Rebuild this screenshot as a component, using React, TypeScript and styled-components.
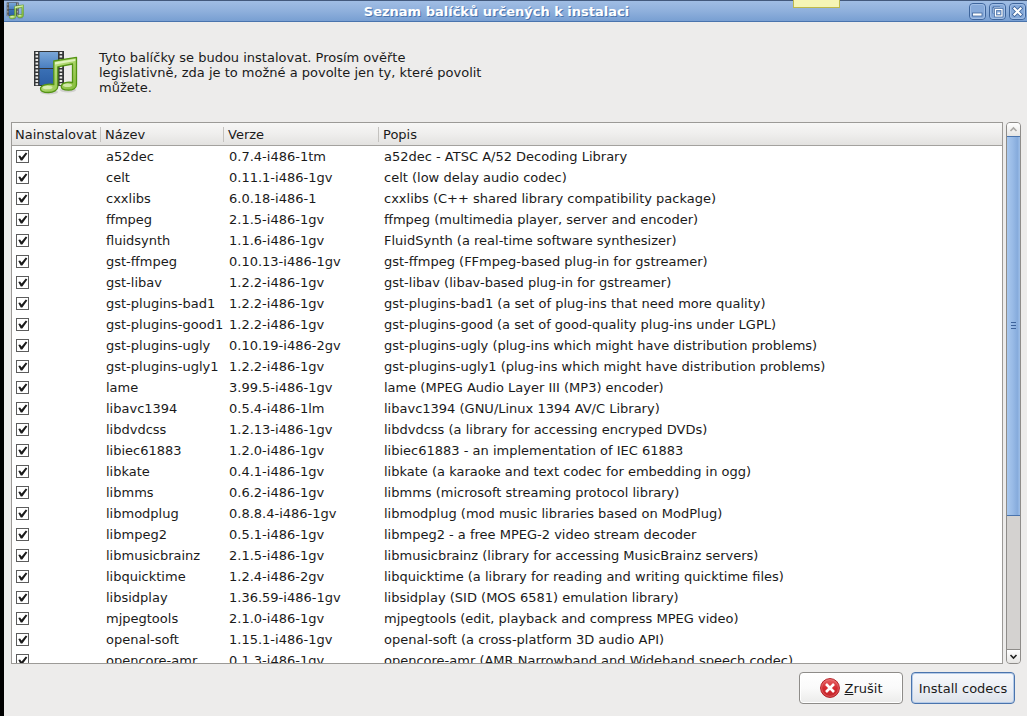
import React, { useState } from "react";
import styled, { createGlobalStyle } from "styled-components";

const GlobalStyle = createGlobalStyle`
  *, *::before, *::after { box-sizing: border-box; }
  body {
    margin: 0;
    background: #edeceb;
    color: #1a1a1a;
    font: 13px/15px "DejaVu Sans", sans-serif;
  }
  button, input { font: inherit; color: inherit; }
`;

const Window = styled.div`
  display: flex;
  flex-direction: column;
  height: 100vh;
  border-left: 4px solid #000;
  background: #edeceb;
  overflow: hidden;
`;

const TitleBar = styled.header`
  position: relative;
  flex: none;
  display: flex;
  align-items: center;
  gap: 3px;
  height: 22px;
  padding: 0 1px 0 2px;
  border-top: 1px solid #43597c;
  border-bottom: 1px solid #4a74ad;
  background: linear-gradient(#a0bde4, #8fb0dc 50%, #789fd2);
`;

const Title = styled.h1`
  flex: 1;
  margin: 0;
  text-align: center;
  font-size: 13px;
  line-height: 15px;
  font-weight: bold;
  color: #fff;
  text-shadow: 1px 1px 0 #4a74ad;
`;

const StickyNote = styled.div`
  position: absolute;
  top: -1px;
  right: 187px;
  width: 47px;
  height: 8px;
  border: 1px solid #bdb94c;
  border-top: 0;
  background: #f5f5b5;
`;

const WindowButton = styled.button`
  display: flex;
  width: 17px;
  height: 17px;
  padding: 0;
  border: 0;
  background: none;
`;

const Intro = styled.section`
  flex: none;
  display: flex;
  gap: 21px;
  height: 100px;
  padding: 28px 28px 0;
`;

const Message = styled.p`
  margin: 0;
  max-width: 384px;
`;

const ListArea = styled.main`
  flex: 1;
  min-height: 0;
  display: flex;
  gap: 3px;
  padding: 0 6px 0 7px;
`;

const ListFrame = styled.div`
  flex: 1;
  min-width: 0;
  overflow: hidden;
  border: 1px solid #9c9a97;
  background: #fff;
`;

const Table = styled.table`
  width: 100%;
  table-layout: fixed;
  border-collapse: separate;
  border-spacing: 0;
`;

const Col = styled.col<{ $width?: number }>`
  width: ${(p) => (p.$width ? `${p.$width}px` : "auto")};
`;

const HeadCell = styled.th`
  height: 23px;
  padding: 0 0 0 3px;
  text-align: left;
  font-weight: normal;
  white-space: nowrap;
  border-bottom: 1px solid #a3a19e;
  background:
    linear-gradient(#c4c2bf, #c4c2bf) right 0 top 4px / 1px 15px no-repeat,
    linear-gradient(#f7f7f6, #efeeed 50%, #e3e2e0);
  & + & { padding-left: 4px; }
  &:last-child { background: linear-gradient(#f7f7f6, #efeeed 50%, #e3e2e0); }
`;

const Cell = styled.td`
  height: 21px;
  padding: 0 0 0 5px;
  white-space: nowrap;
`;

const CheckCell = styled(Cell)`
  padding-left: 4px;
`;

const Check = styled.input`
  appearance: none;
  display: block;
  width: 13px;
  height: 13px;
  margin: 0;
  border: 1px solid #5c5c5c;
  background: #fff;
  &:checked::after {
    content: "";
    display: block;
    width: 11px;
    height: 11px;
    background: #1a1a1a;
    clip-path: polygon(12% 46%, 28% 40%, 42% 58%, 80% 14%, 94% 22%, 48% 86%, 34% 86%);
  }
`;

const ScrollBar = styled.div`
  flex: none;
  display: flex;
  flex-direction: column;
  width: 15px;
  border: 1px solid #8e8c89;
  border-radius: 4px;
  background: #d4d2d0;
  overflow: hidden;
`;

const ScrollButton = styled.button`
  flex: none;
  display: flex;
  align-items: center;
  justify-content: center;
  height: 13px;
  padding: 0;
  border: 0;
  background: linear-gradient(#fff, #e6e5e3);
  &:last-child { border-top: 1px solid #8e8c89; height: 14px; }
`;

const Track = styled.div`
  flex: 1;
  display: flex;
  flex-direction: column;
  margin: 0 -1px;
`;

const Thumb = styled.div`
  display: flex;
  flex-direction: column;
  align-items: center;
  justify-content: center;
  gap: 2px;
  height: 74%;
  border: 1px solid #4a74ad;
  background: linear-gradient(90deg, #a9c8ee, #98bae6 45%, #86abdc 80%, #a0c0e8);
`;

const Grip = styled.span`
  width: 5px;
  height: 1px;
  background: #3d629b;
`;

const Footer = styled.footer`
  flex: none;
  display: flex;
  justify-content: flex-end;
  gap: 8px;
  height: 52px;
  padding: 8px 12px 12px;
`;

const Button = styled.button<{ $primary?: boolean }>`
  display: flex;
  align-items: center;
  justify-content: center;
  gap: 5px;
  width: 104px;
  padding: 0;
  white-space: nowrap;
  border: 1px solid ${(p) => (p.$primary ? "#4a74ad" : "#8e8c89")};
  border-radius: 4px;
  background: ${(p) =>
    p.$primary
      ? "linear-gradient(#f7f9fc, #eceff5 50%, #dde2ea)"
      : "linear-gradient(#ffffff, #fafafa 50%, #ebebea)"};
  box-shadow: ${(p) => (p.$primary ? "inset 0 0 0 1px #b5cbe8" : "inset 0 0 0 1px #fff")};
`;

function MediaIcon({ size }: { size: number }) {
  const holes = [2, 5.5, 9, 12.5, 16, 19.5, 23, 26.5, 30, 33.2];
  return (
    <svg width={size} height={size} viewBox="0 0 46 46" aria-hidden="true">
      <defs>
        <linearGradient id="film" x1="0" y1="0" x2="0" y2="1">
          <stop offset="0" stopColor="#7aa7d8" />
          <stop offset="1" stopColor="#4a7fc0" />
        </linearGradient>
        <linearGradient id="filmLow" x1="0" y1="0" x2="0" y2="1">
          <stop offset="0" stopColor="#3a70b5" />
          <stop offset="1" stopColor="#2c5fa5" />
        </linearGradient>
        <linearGradient id="note" x1="0" y1="0" x2="1" y2="1">
          <stop offset="0" stopColor="#d3efa0" />
          <stop offset="1" stopColor="#82ba34" />
        </linearGradient>
      </defs>
      <rect x="2" y="1" width="30" height="35" fill="#343638" />
      <rect x="7.5" y="2" width="18.5" height="16" fill="url(#film)" />
      <rect x="7.500" y="19" width="18.500" height="16" fill="url(#filmLow)" />
      {holes.map((y) => (
        <g key={y} fill="#e8e8e6">
          <rect x="3.500" y={y} width="2.600" height="2" />
          <rect x="27.600" y={y} width="2.600" height="2" />
        </g>
      ))}
      <ellipse cx="17" cy="42" rx="9" ry="2.500" fill="#000" opacity=".12" />
      <ellipse cx="36" cy="40" rx="8" ry="2.500" fill="#000" opacity=".12" />
      <path
        d="M21.800 11 44.500 7.300V34.500c0 3.500-3.500 5.700-8 5.700-4 0-7.300-1-7.300-3.600 0-3.200 5.600-5.400 11.300-4.100V14L25.800 16.800V36.500c0 3.700-4.300 6-9.300 6-4.300 0-8-1-8-3.800 0-3.400 7-5.600 13.300-4.200Z"
        fill="url(#note)"
        stroke="#549414"
        strokeWidth="1.300"
        strokeLinejoin="round"
      />
      <path d="M23 12.300 43.300 9V11L23 14.500Z" fill="#f1fbd8" opacity=".75" />
      <ellipse cx="15.500" cy="37.500" rx="5" ry="1.800" fill="#f1fbd8" opacity=".65" />
      <ellipse cx="35.500" cy="35.300" rx="4.500" ry="1.800" fill="#f1fbd8" opacity=".65" />
    </svg>
  );
}

function WindowGlyph({ kind }: { kind: "min" | "max" | "close" }) {
  return (
    <svg width="17" height="17" viewBox="0 0 17 17" aria-hidden="true">
      <rect x=".5" y=".5" width="16" height="16" rx="3.5" fill="#86a9d9" stroke="#3e659c" />
      <rect x="1.500" y="1.500" width="14" height="14" rx="2.500" fill="none" stroke="#a8c4e8" strokeWidth=".8" />
      {kind === "min" && <rect x="3.500" y="10" width="9.500" height="3" fill="#fff" stroke="#3e659c" strokeWidth=".8" />}
      {kind === "max" && (
        <g fill="none">
          <path d="M4 10.500V4h7" stroke="#3e659c" />
          <path d="M5 10V5h6" stroke="#c6d8f0" />
          <rect x="6.500" y="6.500" width="6.500" height="6.500" stroke="#3e659c" strokeWidth="2.600" />
          <rect x="6.500" y="6.500" width="6.500" height="6.500" stroke="#fff" strokeWidth="1.300" />
          <rect x="8.500" y="9.500" width="2.500" height="1.500" fill="#fff" />
        </g>
      )}
      {kind === "close" && (
        <g strokeLinecap="square">
          <path d="m5.500 5.500 6 6m0-6-6 6" stroke="#3e659c" strokeWidth="3.800" />
          <path d="m5.500 5.500 6 6m0-6-6 6" stroke="#fff" strokeWidth="2.200" />
        </g>
      )}
    </svg>
  );
}

function Arrow({ up }: { up?: boolean }) {
  return (
    <svg width="9" height="7" viewBox="0 0 9 7" fill="none" aria-hidden="true">
      <path d={up ? "m1.500 5 3-3 3 3" : "m1.500 2 3 3 3-3"} stroke={up ? "#aaa8a5" : "#222"} strokeWidth="1.600" />
    </svg>
  );
}

function CancelIcon() {
  return (
    <svg width="20" height="20" viewBox="0 0 20 20" aria-hidden="true">
      <defs>
        <linearGradient id="cancel" x1="0" y1="0" x2="0" y2="1">
          <stop offset="0" stopColor="#e8686a" />
          <stop offset=".5" stopColor="#d42a30" />
          <stop offset="1" stopColor="#c4262b" />
        </linearGradient>
      </defs>
      <circle cx="10" cy="10" r="9.400" fill="url(#cancel)" stroke="#b11c22" />
      <circle cx="10" cy="10" r="8.400" fill="none" stroke="#ee8b8c" strokeWidth=".7" opacity=".7" />
      <path d="m6 6 8 8m0-8-8 8" stroke="#fff" strokeWidth="2.600" />
    </svg>
  );
}

const packages: [string, string, string][] = [
  ["a52dec", "0.7.4-i486-1tm", "a52dec - ATSC A/52 Decoding Library"],
  ["celt", "0.11.1-i486-1gv", "celt (low delay audio codec)"],
  ["cxxlibs", "6.0.18-i486-1", "cxxlibs (C++ shared library compatibility package)"],
  ["ffmpeg", "2.1.5-i486-1gv", "ffmpeg (multimedia player, server and encoder)"],
  ["fluidsynth", "1.1.6-i486-1gv", "FluidSynth (a real-time software synthesizer)"],
  ["gst-ffmpeg", "0.10.13-i486-1gv", "gst-ffmpeg (FFmpeg-based plug-in for gstreamer)"],
  ["gst-libav", "1.2.2-i486-1gv", "gst-libav (libav-based plug-in for gstreamer)"],
  ["gst-plugins-bad1", "1.2.2-i486-1gv", "gst-plugins-bad1 (a set of plug-ins that need more quality)"],
  ["gst-plugins-good1", "1.2.2-i486-1gv", "gst-plugins-good (a set of good-quality plug-ins under LGPL)"],
  ["gst-plugins-ugly", "0.10.19-i486-2gv", "gst-plugins-ugly (plug-ins which might have distribution problems)"],
  ["gst-plugins-ugly1", "1.2.2-i486-1gv", "gst-plugins-ugly1 (plug-ins which might have distribution problems)"],
  ["lame", "3.99.5-i486-1gv", "lame (MPEG Audio Layer III (MP3) encoder)"],
  ["libavc1394", "0.5.4-i486-1lm", "libavc1394 (GNU/Linux 1394 AV/C Library)"],
  ["libdvdcss", "1.2.13-i486-1gv", "libdvdcss (a library for accessing encryped DVDs)"],
  ["libiec61883", "1.2.0-i486-1gv", "libiec61883 - an implementation of IEC 61883"],
  ["libkate", "0.4.1-i486-1gv", "libkate (a karaoke and text codec for embedding in ogg)"],
  ["libmms", "0.6.2-i486-1gv", "libmms (microsoft streaming protocol library)"],
  ["libmodplug", "0.8.8.4-i486-1gv", "libmodplug (mod music libraries based on ModPlug)"],
  ["libmpeg2", "0.5.1-i486-1gv", "libmpeg2 - a free MPEG-2 video stream decoder"],
  ["libmusicbrainz", "2.1.5-i486-1gv", "libmusicbrainz (library for accessing MusicBrainz servers)"],
  ["libquicktime", "1.2.4-i486-2gv", "libquicktime (a library for reading and writing quicktime files)"],
  ["libsidplay", "1.36.59-i486-1gv", "libsidplay (SID (MOS 6581) emulation library)"],
  ["mjpegtools", "2.1.0-i486-1gv", "mjpegtools (edit, playback and compress MPEG video)"],
  ["openal-soft", "1.15.1-i486-1gv", "openal-soft (a cross-platform 3D audio API)"],
  ["opencore-amr", "0.1.3-i486-1gv", "opencore-amr (AMR Narrowband and Wideband speech codec)"],
];

function PackageRow({ name, version, description }: { name: string; version: string; description: string }) {
  const [install, setInstall] = useState(true);
  return (
    <tr>
      <CheckCell>
        <Check
          type="checkbox"
          aria-labelledby={`pkg-${name}`}
          checked={install}
          onChange={(e) => setInstall(e.target.checked)}
        />
      </CheckCell>
      <Cell id={`pkg-${name}`}>{name}</Cell>
      <Cell>{version}</Cell>
      <Cell>{description}</Cell>
    </tr>
  );
}

export default function App() {
  return (
    <>
      <GlobalStyle />
      <Window>
        <TitleBar>
          <MediaIcon size={18} />
          <Title>Seznam balíčků určených k instalaci</Title>
          <StickyNote />
          <WindowButton type="button" aria-label="Minimalizovat"><WindowGlyph kind="min" /></WindowButton>
          <WindowButton type="button" aria-label="Maximalizovat"><WindowGlyph kind="max" /></WindowButton>
          <WindowButton type="button" aria-label="Zavřít"><WindowGlyph kind="close" /></WindowButton>
        </TitleBar>
        <Intro>
          <MediaIcon size={46} />
          <Message>
            Tyto balíčky se budou instalovat. Prosím ověřte legislativně, zda je to možné a povolte jen ty, které
            povolit můžete.
          </Message>
        </Intro>
        <ListArea>
          <ListFrame>
            <Table>
              <colgroup>
                <Col $width={89} />
                <Col $width={123} />
                <Col $width={155} />
                <Col />
              </colgroup>
              <thead>
                <tr>
                  <HeadCell scope="col">Nainstalovat</HeadCell>
                  <HeadCell scope="col">Název</HeadCell>
                  <HeadCell scope="col">Verze</HeadCell>
                  <HeadCell scope="col">Popis</HeadCell>
                </tr>
              </thead>
              <tbody>
                {packages.map(([name, version, description]) => (
                  <PackageRow key={name} name={name} version={version} description={description} />
                ))}
              </tbody>
            </Table>
          </ListFrame>
          <ScrollBar>
            <ScrollButton type="button" aria-label="Nahoru"><Arrow up /></ScrollButton>
            <Track>
              <Thumb><Grip /><Grip /><Grip /></Thumb>
            </Track>
            <ScrollButton type="button" aria-label="Dolů"><Arrow /></ScrollButton>
          </ScrollBar>
        </ListArea>
        <Footer>
          <Button type="button"><CancelIcon /><span><u>Z</u>rušit</span></Button>
          <Button type="button" $primary>Install codecs</Button>
        </Footer>
      </Window>
    </>
  );
}
